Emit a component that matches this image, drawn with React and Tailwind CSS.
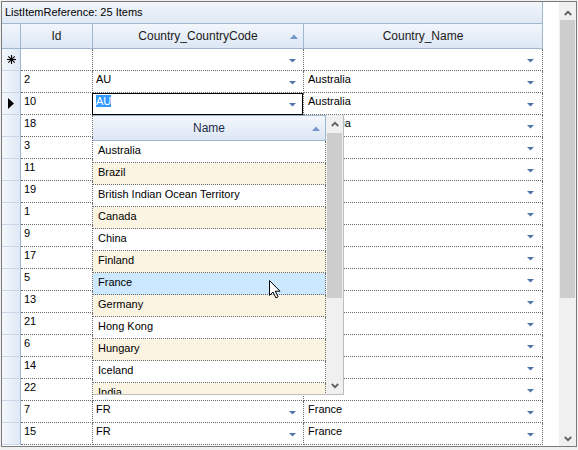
const rows = [
  { id: '2', code: 'AU', name: 'Australia' },
  { id: '10', code: 'AU', name: 'Australia', current: true },
  { id: '18', code: 'AU', name: 'Australia' },
  { id: '3', code: 'BR', name: 'Brazil' },
  { id: '11', code: 'BR', name: 'Brazil' },
  { id: '19', code: 'BR', name: 'Brazil' },
  { id: '1', code: 'CN', name: 'China' },
  { id: '9', code: 'CN', name: 'China' },
  { id: '17', code: 'CN', name: 'China' },
  { id: '5', code: 'IN', name: 'India' },
  { id: '13', code: 'IN', name: 'India' },
  { id: '21', code: 'IN', name: 'India' },
  { id: '6', code: 'IS', name: 'Iceland' },
  { id: '14', code: 'IS', name: 'Iceland' },
  { id: '22', code: 'IS', name: 'Iceland' },
  { id: '7', code: 'FR', name: 'France' },
  { id: '15', code: 'FR', name: 'France' },
]

const countries = [
  'Australia', 'Brazil', 'British Indian Ocean Territory', 'Canada', 'China',
  'Finland', 'France', 'Germany', 'Hong Kong', 'Hungary', 'Iceland', 'India',
]

function DropArrow() {
  return (
    <svg width="7" height="4" viewBox="0 0 7 4" className="shrink-0 self-start mt-[10px]">
      <polygon points="0,0 7,0 3.5,3.5" fill="#5174ad" />
    </svg>
  )
}

function SortArrow() {
  return (
    <svg width="8" height="5" viewBox="0 0 8 5" className="shrink-0">
      <polygon points="0,5 8,5 4,0.5" fill="#7395cb" />
    </svg>
  )
}

function Chevron({ down }) {
  return (
    <svg width="8" height="6" viewBox="0 0 8 6">
      <polyline
        points={down ? '0.8,1 4,4.2 7.2,1' : '0.8,5 4,1.8 7.2,5'}
        fill="none"
        stroke="#606060"
        strokeWidth="1.8"
      />
    </svg>
  )
}

function RowHeader({ children }) {
  return (
    <div className="w-[19px] h-full shrink-0 flex items-center justify-center bg-linear-to-r from-[#f4f8fc] to-[#dfe8f5] border-r border-b border-r-[#9eb6ce] border-b-[#c8d6e8]">
      {children}
    </div>
  )
}

function Asterisk() {
  return (
    <svg width="9" height="9" viewBox="0 0 9 9" stroke="#000" strokeWidth="1.1">
      <line x1="4.5" y1="0" x2="4.5" y2="9" />
      <line x1="0" y1="4.5" x2="9" y2="4.5" />
      <line x1="1.3" y1="1.3" x2="7.7" y2="7.7" />
      <line x1="7.7" y1="1.3" x2="1.3" y2="7.7" />
    </svg>
  )
}

function Pointer() {
  return (
    <svg width="6" height="11" viewBox="0 0 6 11">
      <polygon points="0,0 6,5.5 0,11" fill="#000" />
    </svg>
  )
}

const cell = 'h-full shrink-0 border-r border-b border-dotted border-[#6a6a6a]'
const head = 'shrink-0 border-r border-b border-[#9eb6ce] bg-linear-to-b from-[#f3f7fc] to-[#dce6f4]'

function GridRow({ row }) {
  return (
    <div className="flex h-[22px]">
      <RowHeader>{row.current && <Pointer />}</RowHeader>
      <div className={`${cell} w-[72px] pl-[3px] pt-[2px] leading-[13px]`}>{row.id}</div>
      <div className={`${cell} w-[211px] relative flex justify-between pl-[3px] pr-[7px]`}>
        {row.current && (
          <div className="absolute left-[-1px] top-0 right-0 bottom-[-1px] border border-black" />
        )}
        <span className="pt-[2px] leading-[13px]">
          {row.current ? <span className="bg-[#3399ff] text-white">{row.code}</span> : row.code}
        </span>
        <DropArrow />
      </div>
      <div className={`${cell} w-[239px] flex justify-between pl-[4px] pr-[8px]`}>
        <span className="pt-[2px] leading-[13px]">{row.name}</span>
        <DropArrow />
      </div>
    </div>
  )
}

function Popup() {
  return (
    <div className="absolute left-[93px] top-[115px] w-[251px] h-[280px] flex bg-white border-r border-b border-[#bcbcbc]">
      <div className="w-[233px] flex flex-col overflow-hidden">
        <div className={`${head} h-[26px] relative flex items-center justify-center border-t text-[12px] text-[#1f2d4a]`}>
          Name
          <div className="absolute right-[5px] top-[10px]">
            <SortArrow />
          </div>
        </div>
        {countries.map((c, i) => (
          <div
            key={c}
            className={`h-[22px] shrink-0 pl-[5px] pt-[3px] leading-[13px] border-r border-b border-dotted border-[#6a6a6a] ${
              c === 'France' ? 'bg-[#cce8ff]' : i % 2 ? 'bg-[#fcf4e2]' : 'bg-white'
            }`}
          >
            {c}
          </div>
        ))}
      </div>
      <div className="w-[17px] h-full bg-[#f0f0f0] flex flex-col items-center">
        <div className="h-[18px] pt-[6px]">
          <Chevron />
        </div>
        <div className="w-[15px] h-[165px] bg-[#cdcdcd]" />
        <div className="flex-1" />
        <div className="h-[16px] pb-[5px] flex items-end">
          <Chevron down />
        </div>
      </div>
    </div>
  )
}

function Cursor() {
  return (
    <svg width="13" height="20" viewBox="0 0 13 20" className="absolute left-[268px] top-[279px]">
      <path
        d="M1.5 1.5 L1.5 16.5 L5 13 L7.8 18.8 L10 17.8 L7.3 12.2 L12 12.2 Z"
        fill="#fff"
        stroke="#000"
        strokeWidth="1"
      />
    </svg>
  )
}

export default function App() {
  return (
    <div className="relative w-[578px] h-[450px] bg-[#f0f0f0] pt-px pl-px font-['Liberation_Sans',Arial,sans-serif] text-[11px] text-black">
      <div className="w-[576px] h-[446px] border border-[#7a7a7a] flex bg-white">
        <div className="w-[557px] flex flex-col">
          <div className="w-[541px] h-[22px] shrink-0 flex items-center pl-[3px] border-b border-r border-[#9eb6ce] bg-linear-to-b from-[#f2f6fb] to-[#dfe8f4]">
            ListItemReference: 25 Items
          </div>
          <div className="flex h-[25px] shrink-0 text-[12px] text-[#1b1b1b]">
            <div className={`${head} w-[19px]`} />
            <div className={`${head} w-[72px] flex items-center justify-center`}>Id</div>
            <div className={`${head} w-[211px] relative flex items-center justify-center`}>
              Country_CountryCode
              <div className="absolute right-[5px] top-[10px]">
                <SortArrow />
              </div>
            </div>
            <div className={`${head} w-[239px] flex items-center justify-center`}>Country_Name</div>
          </div>

          {/* new-row line */}
          <div className="flex h-[22px]">
            <RowHeader>
              <Asterisk />
            </RowHeader>
            <div className={`${cell} w-[72px]`} />
            <div className={`${cell} w-[211px] flex justify-end pr-[7px]`}>
              <DropArrow />
            </div>
            <div className={`${cell} w-[239px] flex justify-end pr-[8px]`}>
              <DropArrow />
            </div>
          </div>

          {rows.map((r) => (
            <GridRow key={r.id} row={r} />
          ))}
        </div>

        <div className="w-[17px] h-full bg-[#f0f0f0] flex flex-col items-center">
          <div className="h-[18px] pt-[8px]">
            <Chevron />
          </div>
          <div className="w-[15px] h-[278px] bg-[#cdcdcd]" />
          <div className="flex-1" />
          <div className="h-[16px] pb-[4px] flex items-end">
            <Chevron down />
          </div>
        </div>
      </div>

      <Popup />
      <Cursor />
    </div>
  )
}
